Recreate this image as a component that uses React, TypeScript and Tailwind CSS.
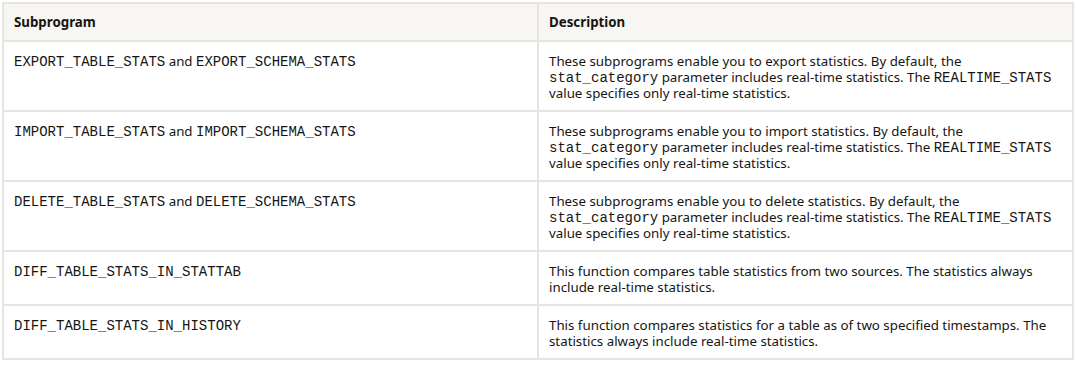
import React from "react";

type Row = {
  name: React.ReactNode;
  desc: React.ReactNode;
};

const Code = ({ children }: { children: React.ReactNode }) => (
  <code className="font-['Liberation_Mono','Courier_New',monospace] text-[14px] leading-none text-[#161513]">
    {children}
  </code>
);

const statsDesc = (verb: string) => (
  <>
    These subprograms enable you to {verb} statistics. By default, the{" "}
    <Code>stat_category</Code> parameter includes real-time statistics. The{" "}
    <Code>REALTIME_STATS</Code> value specifies only real-time statistics.
  </>
);

const rows: Row[] = [
  {
    name: (
      <>
        <Code>EXPORT_TABLE_STATS</Code> and <Code>EXPORT_SCHEMA_STATS</Code>
      </>
    ),
    desc: statsDesc("export"),
  },
  {
    name: (
      <>
        <Code>IMPORT_TABLE_STATS</Code> and <Code>IMPORT_SCHEMA_STATS</Code>
      </>
    ),
    desc: statsDesc("import"),
  },
  {
    name: (
      <>
        <Code>DELETE_TABLE_STATS</Code> and <Code>DELETE_SCHEMA_STATS</Code>
      </>
    ),
    desc: statsDesc("delete"),
  },
  {
    name: <Code>DIFF_TABLE_STATS_IN_STATTAB</Code>,
    desc: "This function compares table statistics from two sources. The statistics always include real-time statistics.",
  },
  {
    name: <Code>DIFF_TABLE_STATS_IN_HISTORY</Code>,
    desc: "This function compares statistics for a table as of two specified timestamps. The statistics always include real-time statistics.",
  },
];

export default function App() {
  return (
    <div className="bg-white min-h-screen pt-[2px] pl-[2px] font-['Noto_Sans','Open_Sans',sans-serif] text-[#161513]">
      <table className="w-[1072px] border-collapse border-2 border-[#e6e5e1] text-[13.3px] leading-4 table-fixed">
        <thead>
          <tr className="bg-[#f7f6f3]">
            <th className="w-1/2 border-2 border-[#e6e5e1] px-[10px] py-[10px] text-left font-bold">
              Subprogram
            </th>
            <th className="w-1/2 border-2 border-[#e6e5e1] px-[10px] py-[10px] text-left font-bold">
              Description
            </th>
          </tr>
        </thead>
        <tbody>
          {rows.map((r, i) => (
            <tr key={i}>
              <td className="border-2 border-[#e6e5e1] px-[10px] pt-[11px] pb-[9px] align-top">
                {r.name}
              </td>
              <td className="border-2 border-[#e6e5e1] px-[10px] pt-[11px] pb-[9px] align-top">
                {r.desc}
              </td>
            </tr>
          ))}
        </tbody>
      </table>
    </div>
  );
}
